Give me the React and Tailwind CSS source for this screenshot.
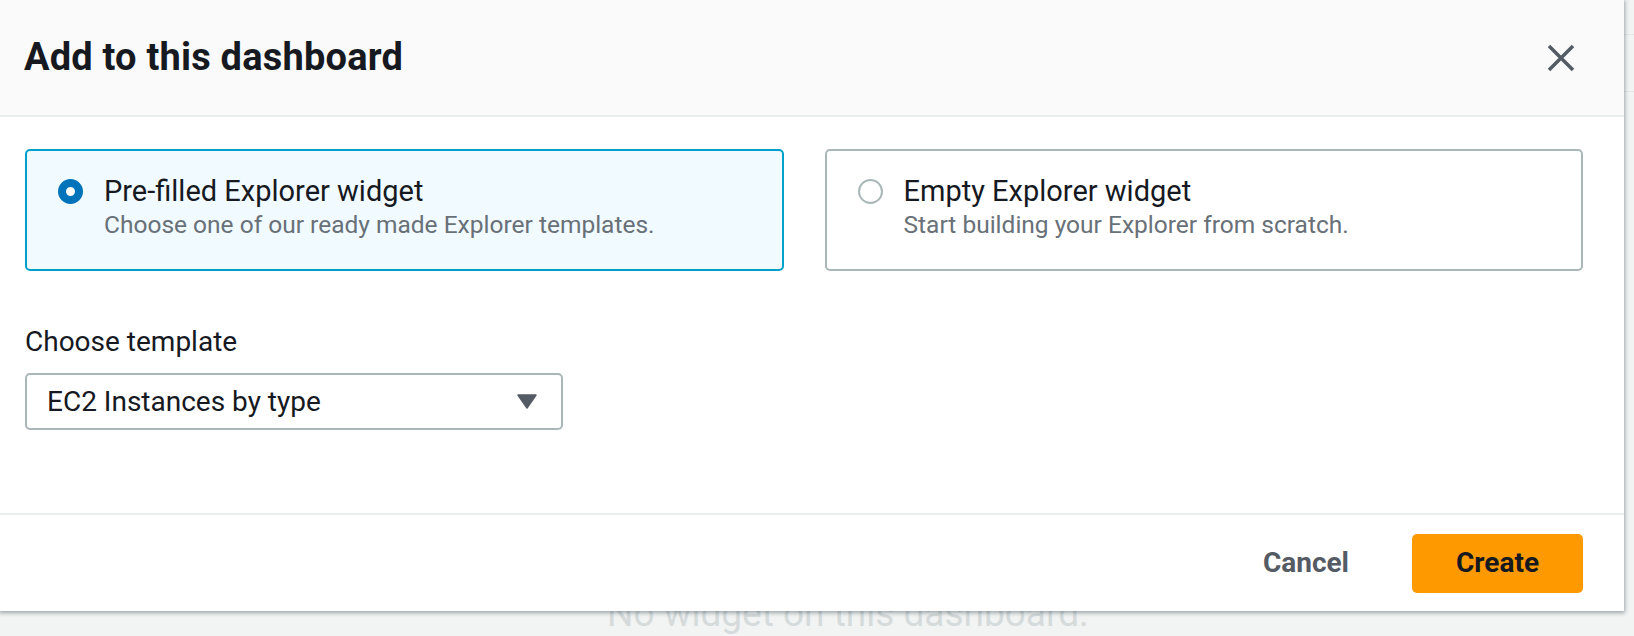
import React from "react";

const font = { fontFamily: "Roboto, 'Noto Sans', sans-serif" };

const Radio = ({ checked }) =>
  checked ? (
    <span className="block w-[25px] h-[25px] rounded-full border-[8px] border-[#0073bb] bg-white shrink-0" />
  ) : (
    <span className="block w-[25px] h-[25px] rounded-full border-2 border-[#aab7b8] bg-white shrink-0" />
  );

const OptionCard = ({ checked, title, desc }) => (
  <div
    className={`h-[122px] rounded-[5px] border-2 pl-[31px] pt-[22px] flex gap-[21px] ${
      checked ? "border-[#00a1c9] bg-[#f1faff]" : "border-[#aab7b8] bg-white"
    }`}
  >
    <div className="h-[36px] flex items-center">
      <Radio checked={checked} />
    </div>
    <div>
      <div className="text-[29px] leading-[36px] text-[#16191f]">{title}</div>
      <div className="text-[24.5px] leading-[32px] text-[#687078]">{desc}</div>
    </div>
  </div>
);

const App = () => {
  return (
    <div className="relative w-[1634px] h-[636px] overflow-hidden bg-[#f2f3f3]" style={font}>
      {/* page behind the modal */}
      <div className="h-[35px] border-b border-[#e3e6e6]" />
      <div className="h-[57px] border-b border-[#e3e6e6]" />
      <div className="pt-[503px] pl-[607px] text-[37px] leading-[37px] text-[#d5dbdb]">
        No widget on this dashboard.
      </div>

      {/* modal */}
      <div className="absolute top-0 left-0 w-[1624px] h-[611px] bg-white flex flex-col shadow-[0_1px_4px_1px_rgba(0,28,36,0.35)]">
        <div className="h-[117px] shrink-0 bg-[#fafafa] border-b-2 border-[#eaeded] flex items-center justify-between pl-[24px] pr-[49px]">
          <h2 className="text-[38px] font-bold text-[#16191f] tracking-[0.2px]">
            Add to this dashboard
          </h2>
          <svg width="28" height="28" viewBox="0 0 28 28">
            <path
              d="M2 2 L26 26 M26 2 L2 26"
              stroke="#545b64"
              strokeWidth="3.5"
              fill="none"
            />
          </svg>
        </div>

        <div className="flex-1 pl-[25px] pr-[41px] pt-[32px]">
          <div className="grid grid-cols-2 gap-[41px]">
            <OptionCard
              checked
              title="Pre-filled Explorer widget"
              desc="Choose one of our ready made Explorer templates."
            />
            <OptionCard
              title="Empty Explorer widget"
              desc="Start building your Explorer from scratch."
            />
          </div>

          <div className="mt-[53px] text-[28px] leading-[36px] text-[#16191f]">
            Choose template
          </div>
          <div className="mt-[13px] w-[538px] h-[57px] rounded-[5px] border-2 border-[#aab7b8] bg-white flex items-center justify-between pl-[20px] pr-[24px]">
            <span className="text-[28px] text-[#16191f]">EC2 Instances by type</span>
            <svg width="20" height="15" viewBox="0 0 20 15">
              <path d="M1 1 H19 L10 14 Z" fill="#545b64" stroke="#545b64" strokeWidth="1.5" strokeLinejoin="round" />
            </svg>
          </div>
        </div>

        <div className="h-[98px] shrink-0 border-t-2 border-[#eaeded] flex items-center justify-end gap-[63px] pr-[41px]">
          <button type="button" className="text-[28px] font-bold text-[#545b64]">
            Cancel
          </button>
          <button
            type="button"
            className="w-[171px] h-[59px] rounded-[5px] bg-[#ff9900] text-[28px] font-bold text-[#16191f]"
          >
            Create
          </button>
        </div>
      </div>
    </div>
  );
};

export default App;
